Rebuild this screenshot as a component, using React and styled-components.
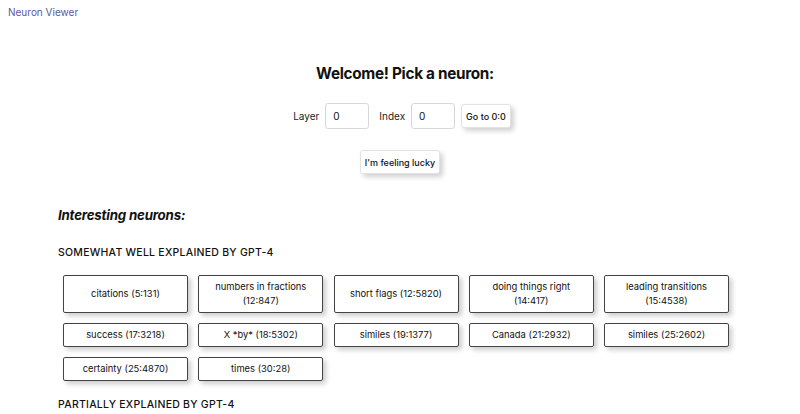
import React from "react";
import styled, { createGlobalStyle } from "styled-components";

const GlobalStyle = createGlobalStyle`
  body {
    margin: 0;
    background: #fff;
    font-family: Inter, "Noto Sans", sans-serif;
    color: #111;
  }
`;

const sections = [
  {
    title: "SOMEWHAT WELL EXPLAINED BY GPT-4",
    neurons: [
      ["citations", "5:131"],
      ["numbers in fractions", "12:847"],
      ["short flags", "12:5820"],
      ["doing things right", "14:417"],
      ["leading transitions", "15:4538"],
      ["success", "17:3218"],
      ["X *by*", "18:5302"],
      ["similes", "19:1377"],
      ["Canada", "21:2932"],
      ["similes", "25:2602"],
      ["certainty", "25:4870"],
      ["times", "30:28"],
    ],
  },
  {
    title: "PARTIALLY EXPLAINED BY GPT-4",
    neurons: [],
  },
];

const App = () => {
  return (
    <Page>
      <GlobalStyle />
      <Brand href="#">Neuron Viewer</Brand>
      <Heading>Welcome! Pick a neuron:</Heading>
      <PickRow>
        <Label>Layer</Label>
        <NumberInput defaultValue="0" />
        <Label>Index</Label>
        <NumberInput defaultValue="0" />
        <Button>Go to 0:0</Button>
      </PickRow>
      <LuckyRow>
        <Button>I'm feeling lucky</Button>
      </LuckyRow>
      <Interesting>
        <SubHeading>Interesting neurons:</SubHeading>
        {sections.map((section) => (
          <Section key={section.title}>
            <SectionTitle>{section.title}</SectionTitle>
            {section.neurons.length > 0 && (
              <Grid>
                {section.neurons.map(([name, id], i) => (
                  <Card key={i} href="#">
                    {name} ({id})
                  </Card>
                ))}
              </Grid>
            )}
          </Section>
        ))}
      </Interesting>
    </Page>
  );
};

const Page = styled.div`
  padding: 6px 8px 0;
`;

const Brand = styled.a`
  display: block;
  font-size: 10px;
  line-height: 12px;
  color: #5a58a0;
  text-decoration: none;
`;

const Heading = styled.h1`
  margin: 45px 0 0;
  padding-left: 10px;
  text-align: center;
  font-size: 15.3px;
  line-height: 22px;
  font-weight: 700;
  letter-spacing: -0.3px;
`;

const PickRow = styled.div`
  display: flex;
  justify-content: center;
  align-items: center;
  gap: 6px;
  margin-top: 18px;
`;

const Label = styled.span`
  font-size: 10px;
  color: #222;
  margin-left: 4px;
`;

const NumberInput = styled.input`
  box-sizing: border-box;
  width: 44px;
  height: 26px;
  padding: 0 7px;
  border: 1px solid #d8d8d8;
  border-radius: 3px;
  font-family: inherit;
  font-size: 10px;
  color: #111;
  outline: none;
`;

const Button = styled.button`
  height: 24px;
  padding: 0 4px;
  background: #fff;
  border: 1px solid #e2e2e2;
  border-radius: 3px;
  box-shadow: 3px 3px 5px rgba(0, 0, 0, 0.18);
  font-family: inherit;
  font-size: 9px;
  font-weight: 500;
  color: #111;
  cursor: pointer;
`;

const LuckyRow = styled.div`
  display: flex;
  justify-content: center;
  margin-top: 21px;
`;

const Interesting = styled.div`
  padding: 0 50px;
  margin-top: 32px;
`;

const SubHeading = styled.h2`
  margin: 0;
  font-size: 13.3px;
  line-height: 18px;
  font-style: italic;
  font-weight: 700;
  letter-spacing: -0.2px;
`;

const Section = styled.div`
  margin-top: 22px;

  & + & {
    margin-top: 17px;
  }
`;

const SectionTitle = styled.h3`
  margin: 0;
  font-size: 10.5px;
  line-height: 14px;
  font-weight: 500;
  letter-spacing: 0.25px;
`;

const Grid = styled.div`
  display: grid;
  grid-template-columns: repeat(5, 125px);
  gap: 10px 10.25px;
  margin: 15px 0 0 5px;
`;

const Card = styled.a`
  display: flex;
  align-items: center;
  justify-content: center;
  padding: 4px 12px;
  border: 1px solid #444;
  border-radius: 2px;
  box-shadow: 3px 3px 5px rgba(0, 0, 0, 0.2);
  text-align: center;
  font-size: 9.4px;
  line-height: 14px;
  color: #111;
  text-decoration: none;
`;

export default App;
